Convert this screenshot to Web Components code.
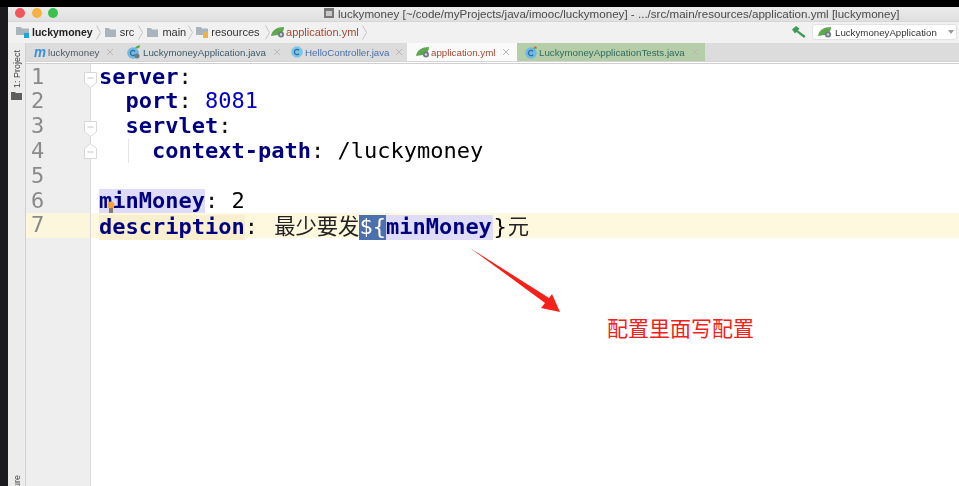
<!DOCTYPE html>
<html lang="zh"><head><meta charset="utf-8"><title>luckymoney</title>
<style>
html,body{margin:0;height:100%;background:#1b1b1f;overflow:hidden}
body{width:959px;height:486px;font-family:"Liberation Sans",sans-serif;position:relative}
</style></head><body>
<ide-window>
  <ide-title slot="title">luckymoney [~/code/myProjects/java/imooc/luckymoney] - .../src/main/resources/application.yml [luckymoney]</ide-title>
  <ide-nav slot="nav"></ide-nav>
  <ide-tabs slot="tabs"></ide-tabs>
  <ide-strip slot="strip"></ide-strip>
  <ide-editor slot="editor"></ide-editor>
</ide-window>
<red-note></red-note>
<script>
const icons={
 folder:`<svg width="11" height="10" viewBox="0 0 11 10" style="flex:none"><path d="M0 1h4l1 1.500h6V10H0z" fill="#a9b4bd"/></svg>`,
 rootfolder:`<svg width="14" height="12" viewBox="0 0 14 12" style="flex:none"><path d="M0 1h5l1 1.500h7V9H0z" fill="#a9b4bd"/><rect x="8" y="7" width="5" height="5" fill="#1aa7d8"/></svg>`,
 resfolder:`<svg width="12" height="12" viewBox="0 0 12 12" style="flex:none"><path d="M0 1h5l1 1.500h6V9H0z" fill="#a9b4bd"/><rect x="7" y="6" width="5" height="6" fill="#e9b44c"/></svg>`,
 leaf:`<svg width="14" height="12" viewBox="0 0 14 12" style="flex:none"><path d="M0 10C1 4 6 1 13 1c0 4-2 7-6 8-3 .7-5 .3-7 1z" fill="#5fa84f"/><circle cx="10" cy="8.500" r="3" fill="#6d7b85"/><circle cx="10" cy="8.500" r="1.200" fill="#d5dde0"/></svg>`,
 maven:`<svg width="12" height="11" viewBox="0 0 12 11" style="flex:none;overflow:visible"><text x="0" y="10" font-family="Liberation Sans" font-style="italic" font-weight="700" font-size="14" textLength="12" lengthAdjust="spacingAndGlyphs" fill="#3b8fd6">m</text></svg>`,
 cls:`<svg width="12" height="12" viewBox="0 0 12 12" style="flex:none"><circle cx="6" cy="6" r="5.800" fill="#7cc4e8"/><path d="M8 4.300A2.600 2.600 0 1 0 8 7.700" fill="none" stroke="#2c6ea0" stroke-width="1.300"/></svg>`,
 clsrun:`<svg width="14" height="14" viewBox="0 0 14 14" style="flex:none"><circle cx="6" cy="8" r="5.800" fill="#6fb9e0"/><path d="M8 6.300A2.600 2.600 0 1 0 8 9.700" fill="none" stroke="#2c6ea0" stroke-width="1.300"/><path d="M8 3C9 1 11 .5 13 .5 13 3 11 4 8 3z" fill="#5fa84f"/><circle cx="10" cy="11" r="2.500" fill="#6d7b85"/></svg>`,
 clstest:`<svg width="13" height="14" viewBox="0 0 13 14" style="flex:none"><circle cx="6" cy="8" r="5.800" fill="#6fb9e0"/><path d="M8 6.300A2.600 2.600 0 1 0 8 9.700" fill="none" stroke="#2c6ea0" stroke-width="1.300"/><path d="M8 3.500 10 1l2 2z" fill="#d2683c"/><path d="M9 3.500 12 3" stroke="#5fa84f"/></svg>`,
 hammer:`<svg width="14" height="12" viewBox="0 0 14 12" style="flex:none"><path d="M0 3.500 4 0l3.500 2.500L6 4.500 13.500 10 12 12 4.500 6 3 7.500z" fill="#3f9a58"/></svg>`,
 win:`<svg width="10" height="10" viewBox="0 0 10 10" style="flex:none"><rect width="10" height="10" fill="#777"/><rect x="2" y="3" width="6" height="5" fill="#c8c8c8"/></svg>`,
 chev:`<svg width="5" height="15" viewBox="0 0 5 15" style="flex:none"><path d="M.5.500 4.500 7.500.5 14.500" fill="none" stroke="#c4c4c4"/></svg>`,
 x:`<svg width="8" height="8" viewBox="0 0 8 8" style="flex:none"><path d="M1 1l6 6M7 1 1 7" stroke="#b9b9b9"/></svg>`,
 pfolder:`<svg width="11" height="8" viewBox="0 0 11 8" style="flex:none"><path d="M0 0h4l1 1h6v7H0z" fill="#5e5e5e"/></svg>`
};
function comp(name,css,html){customElements.define(name,class extends HTMLElement{
 connectedCallback(){if(this.shadowRoot)return;const r=this.attachShadow({mode:"open"});
  r.innerHTML=`<style>${css}</style>`+(typeof html==="function"?html(this):html);}
});}
comp("ide-window",`
 :host{display:flex;flex-direction:column;width:959px;height:486px;box-sizing:border-box;padding:7px 0 0 8px;background:linear-gradient(#000 7px,#1b1b1f 7px);filter:blur(.45px)}
 .body{flex:1;display:flex;min-height:0}
`,`<slot name="title"></slot><slot name="nav"></slot><slot name="tabs"></slot><div class="body"><slot name="strip"></slot><slot name="editor"></slot></div>`);
comp("ide-title",`
 :host{display:flex;align-items:center;height:14px;box-sizing:border-box;padding-bottom:2px;background:linear-gradient(#ececec,#dfdfdf);font-size:11.600px;color:#4a4a4a;flex:none}
 .l{display:flex;gap:6.500px;margin-left:7px;width:309px}
 .l i{width:10px;height:10px;border-radius:50%}
 .t{display:flex;align-items:center;gap:4px;white-space:nowrap}
`,`<div class="l"><i style="background:#f0575a"></i><i style="background:#f5b23e"></i><i style="background:#3bbf50"></i></div><div class="t">${icons.win}<span><slot></slot></span></div>`);
comp("ide-nav",`
 :host{display:flex;align-items:center;height:22px;background:#f1f1f1;border-top:1px solid #d6d6d6;box-sizing:border-box;padding:0 0 1px 8px;font-size:11px;color:#333;flex:none}
 .c{display:flex;align-items:center;gap:4px;margin-right:4px}
 b{font-size:10.500px;color:#222}
 .chev{display:flex;margin-right:4px}
 .red{color:#a5482e}
 .hammer{margin-left:auto;display:flex;margin-right:6px}
 .combo{width:145px;height:16px;box-sizing:border-box;background:#fff;border:1px solid #e2e2e2;border-radius:3px;display:flex;align-items:center;padding-left:5px;gap:3px;margin-right:2px;font-size:9.700px;color:#333}
 .arr{width:0;height:0;border:3.500px solid transparent;border-top:4px solid #999;border-bottom:0;margin-left:8px}
`,`<div class="c" style="gap:2px;margin-right:3px">${icons.rootfolder}<b>luckymoney</b></div><div class="chev">${icons.chev}</div>
 <div class="c">${icons.folder}<span>src</span></div><div class="chev">${icons.chev}</div>
 <div class="c" style="margin-right:2px">${icons.folder}<span>main</span></div><div class="chev" style="margin-right:3px">${icons.chev}</div>
 <div class="c" style="gap:3px;margin-right:5px">${icons.resfolder}<span>resources</span></div><div class="chev" style="margin-right:1px">${icons.chev}</div>
 <div class="c" style="gap:1.500px;margin-right:3px">${icons.leaf}<span class="red">application.yml</span></div><div class="chev">${icons.chev}</div>
 <div class="hammer">${icons.hammer}</div>
 <div class="combo">${icons.leaf}<span>LuckymoneyApplication</span><i class="arr"></i></div>`);
comp("ide-tab",`
 :host{display:flex;align-items:center;gap:2px;height:18px;font-size:9.750px;flex:none;box-sizing:border-box;white-space:nowrap}
 .x{display:flex;margin-left:var(--xm,5px)}
`,t=>`${icons[t.getAttribute("icon")]}<span><slot></slot></span><span class="x">${icons.x}</span>`);
comp("ide-tabs",`
 :host{display:flex;flex-direction:column;flex:none;background:#dcdcdc;margin-left:18px}
 .row{display:flex;height:18px}
 .line{height:3px;background:#fff;border-top:1px solid #d4d4d4;border-bottom:1px solid #cfcfcf;box-sizing:border-box}
`,`<div class="row">
 <ide-tab icon="maven" style="color:#4f5a66;width:99px;padding-left:8px">luckymoney</ide-tab>
 <ide-tab icon="clsrun" style="color:#3e5a68;width:160px;padding-left:2px">LuckymoneyApplication.java</ide-tab>
 <ide-tab icon="cls" style="color:#4a6fa8;width:122px;padding-left:6px;--xm:3px">HelloController.java</ide-tab>
 <ide-tab icon="leaf" style="color:#a5482e;background:#fafafa;width:110px;padding-left:9px;gap:1px">application.yml</ide-tab>
 <ide-tab icon="clstest" style="color:#2f6b5e;background:#b6cdaa;width:188px;padding-left:8px;gap:1px">LuckymoneyApplicationTests.java</ide-tab>
 </div><div class="line"></div>`);
comp("ide-strip",`
 :host{display:flex;flex-direction:column;align-items:center;width:18px;box-sizing:border-box;margin-top:-21px;background:#ececec;border-right:1px solid #d2d2d2;overflow:hidden;flex:none;font-size:9px;color:#444}
 .v{writing-mode:vertical-rl;transform:rotate(180deg);white-space:nowrap}
 .p{margin-top:7px}
 .f{display:flex;margin-top:4px}
 .s{margin-top:auto;margin-bottom:-26px}
`,`<span class="v p">1: Project</span><span class="f">${icons.pfolder}</span><span class="v s">Structure</span>`);
comp("code-line",`
 :host{display:flex;height:24.800px;position:relative;--bg:transparent;--gbg:#eeeeee}
 :host([current]){--bg:#fdf8de;--gbg:#fbf6dc}
 .n{background:var(--gbg);border-right:1px solid #dadada;color:#8a8a8a;font-weight:400;padding-left:5px;box-sizing:border-box;flex:none;width:65px}
 .c{flex:1;background:var(--bg);padding-left:8px;white-space:pre;color:#000}
 .m{position:absolute;left:58px;display:flex}
`,t=>`<div class="n">${t.getAttribute("n")}</div><div class="c"><slot></slot></div>${t.hasAttribute("fold")?(t.getAttribute("fold")==="end"
 ?`<div class="m" style="top:4px"><svg width="13" height="16" viewBox="0 0 13 16"><path d="M.5 15.500V5.500L6.500.5l6 5v10z" fill="#fff" stroke="#d8d8d8"/><path d="M3.500 9h6" stroke="#c4c4c4"/></svg></div>`
 :`<div class="m" style="top:7px"><svg width="13" height="16" viewBox="0 0 13 16"><path d="M.5.500h12v10l-6 5-6-5z" fill="#fff" stroke="#d8d8d8"/><path d="M3.500 6h6" stroke="#c4c4c4"/></svg></div>`):""}`);
comp("ide-editor",`
 :host{display:block;flex:1;background:#fff;font:22px/24.800px "DejaVu Sans Mono","Noto Sans CJK SC",monospace;position:relative;overflow:hidden;padding-top:.6px}
 .top{position:absolute;left:0;top:0;height:1px;width:64px;background:#eee;border-right:1px solid #dadada}
 .rest{position:absolute;left:0;top:174.200px;bottom:0;width:64px;background:#eeeeee;border-right:1px solid #dadada}
 b{color:#000080;font-weight:700}
 .col{color:#111}
 .num{color:#0000c8}
 .k{background:#dedcf9;display:inline-block}
 .cur{background:#f8efcf;display:inline-block}
 .sel{background:#4c70ad;color:#fff;display:inline-block}
 .cjk{font-family:"Noto Sans CJK SC",sans-serif;font-size:21.300px;color:#222}
 .bulb{position:absolute;left:81px;top:137px}
 .guide{position:absolute;left:102px;top:75px;width:1px;height:24px;background:#e4e4e4}
 code-line{display:flex}
`,`<div class="top"></div><code-line n="1" fold="start"><b>server</b><span class="col">:</span></code-line>
 <code-line n="2"><span>  </span><b>port</b><span class="col">:</span> <span class="num">8081</span></code-line>
 <code-line n="3" fold="start"><span>  </span><b>servlet</b><span class="col">:</span></code-line>
 <code-line n="4" fold="end"><span>    </span><b>context-path</b><span class="col">:</span> /luckymoney</code-line>
 <code-line n="5"></code-line>
 <code-line n="6"><b class="k">minMoney</b><span class="col">:</span> 2</code-line>
 <code-line n="7" current><b class="cur">description</b><span class="col">:</span> <span class="cjk" style="margin-left:3px">最少要发</span><span class="sel">\${</span><b class="k" style="padding-right:1.500px">minMoney</b>}<span class="cjk" style="margin-left:1px">元</span></code-line>
 <div class="rest"></div>
 <svg class="bulb" width="8" height="13" viewBox="0 0 8 13"><circle cx="4" cy="4" r="3.500" fill="#f0a63c"/><rect x="2" y="7" width="4" height="5" fill="#8a7a6a"/></svg>
 <div class="guide"></div>`);
comp("red-note",`
 :host{display:block;position:absolute;left:0;top:0;width:959px;height:486px;pointer-events:none}
 svg{position:absolute;left:0;top:0}
 .t{position:absolute;left:607px;top:314px;font:21px/26px "Noto Sans CJK SC",sans-serif;color:#f0211a;white-space:nowrap}
`,`<svg width="959" height="486" viewBox="0 0 959 486"><polygon points="470,248 549,298 552,294 560,312 541,308 545,303" fill="#f5201a"/></svg><div class="t">配置里面写配置</div>`);
</script>
</body></html>
